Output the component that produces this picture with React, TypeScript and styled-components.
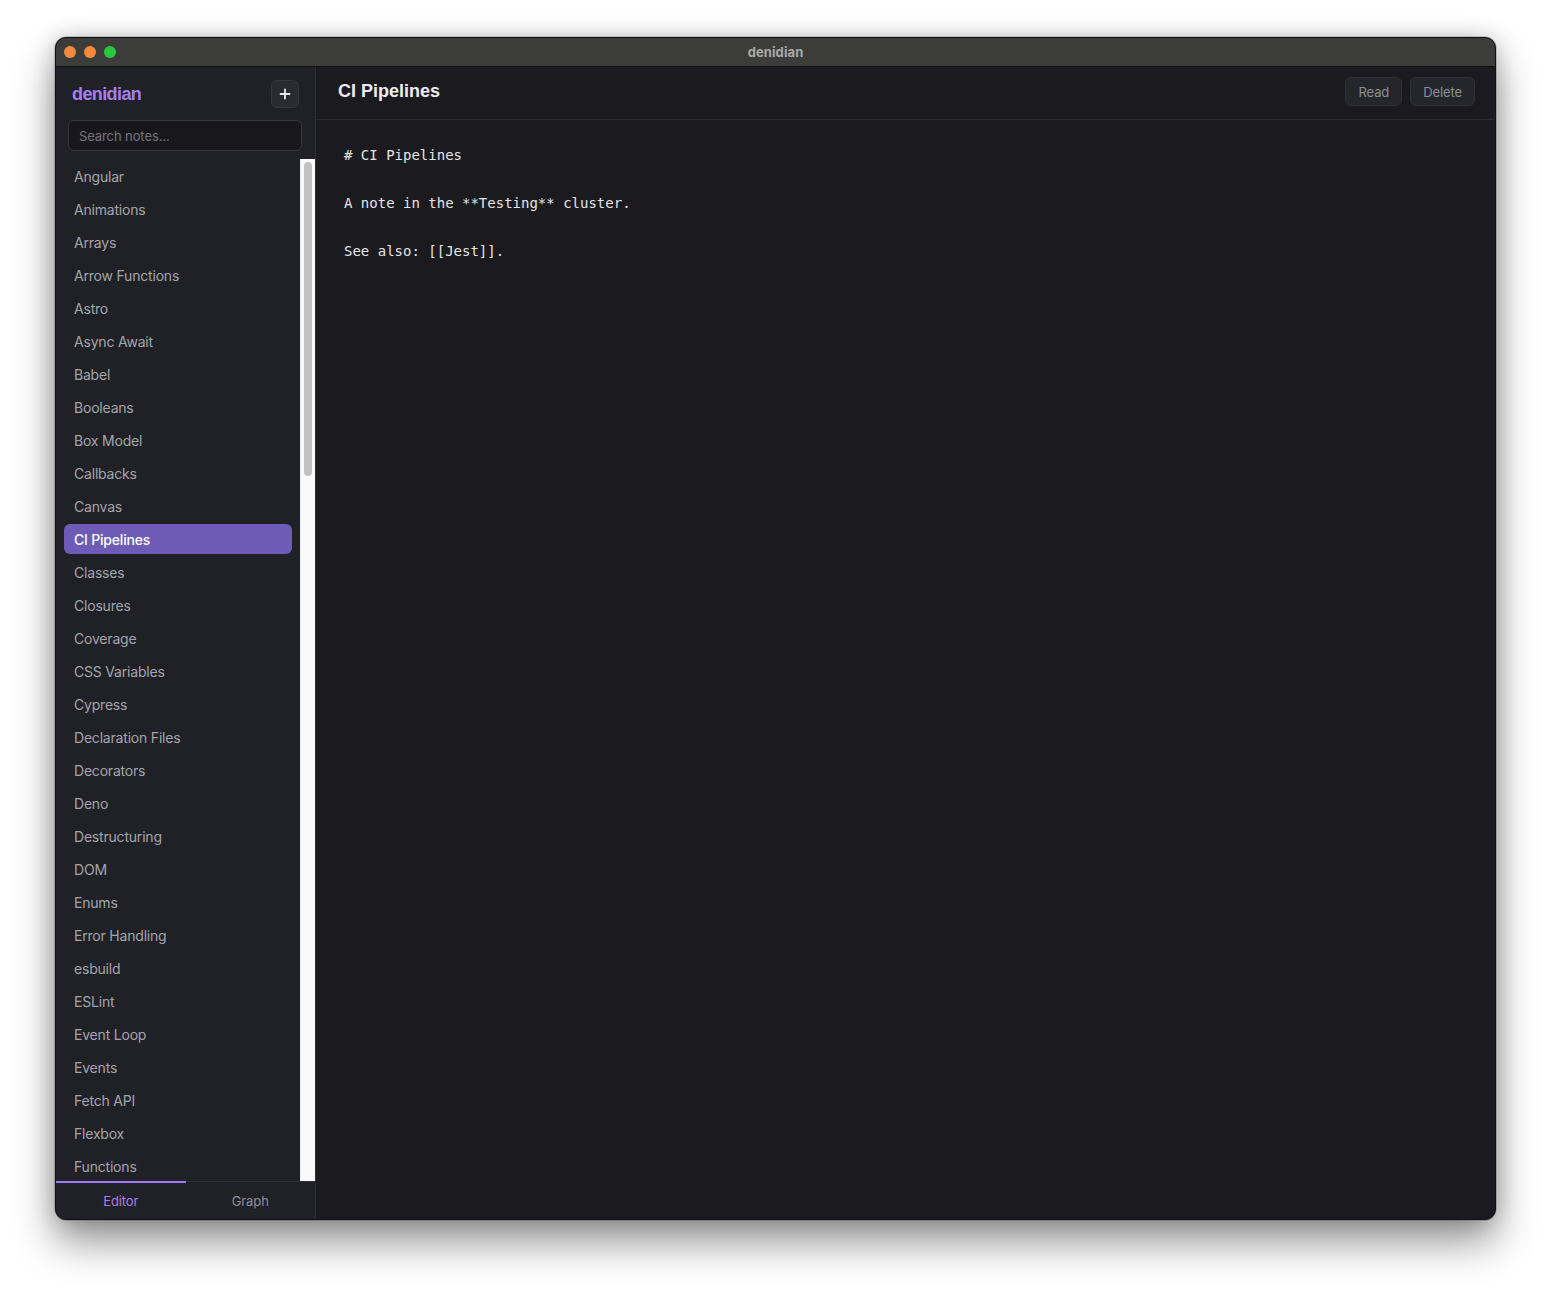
import React from "react";
import styled, { createGlobalStyle } from "styled-components";

const GlobalStyle = createGlobalStyle`
  html, body {
    margin: 0;
    padding: 0;
    background: #ffffff;
  }
  body {
    font-family: Inter, "Liberation Sans", Arial, sans-serif;
    -webkit-font-smoothing: antialiased;
  }
  * { box-sizing: border-box; }
`;

const Page = styled.div`
  width: 1551px;
  height: 1294px;
  padding: 37px 55px 74px 55px;
  background: #ffffff;
`;

const Window = styled.div`
  width: 1441px;
  height: 1183px;
  border-radius: 11px;
  border: 1px solid #111114;
  box-shadow: 0 0 0 0.5px rgba(0, 0, 0, 0.3), 0 22px 40px rgba(0, 0, 0, 0.42),
    0 0 22px rgba(0, 0, 0, 0.18);
  overflow: hidden;
  display: flex;
  flex-direction: column;
  background: #1b1b1f;
`;

const TitleBar = styled.div`
  height: 29px;
  flex: none;
  background: #3c3d3b;
  border-bottom: 1px solid #111;
  display: grid;
  grid-template-columns: 1fr auto 1fr;
  align-items: center;
  padding: 0 8px;
`;

const Lights = styled.div`
  display: flex;
  gap: 8px;
`;

const Light = styled.span<{ $c: string }>`
  width: 12px;
  height: 12px;
  border-radius: 50%;
  background: ${(p) => p.$c};
`;

const TitleText = styled.div`
  font-size: 13px;
  font-weight: 700;
  color: #a9a9a9;
  letter-spacing: 0.1px;
`;

const Body = styled.div`
  flex: 1;
  display: flex;
  min-height: 0;
`;

const Sidebar = styled.aside`
  width: 260px;
  flex: none;
  background: #202126;
  border-right: 1px solid #2e2f35;
  display: flex;
  flex-direction: column;
  min-height: 0;
`;

const SideHeader = styled.div`
  display: flex;
  align-items: center;
  justify-content: space-between;
  padding: 13px 16px 0 16px;
  height: 41px;
`;

const Brand = styled.div`
  font-family: "Liberation Sans", Arial, sans-serif;
  font-size: 18px;
  font-weight: 700;
  color: #a47ff0;
  letter-spacing: -0.6px;
`;

const IconButton = styled.button`
  width: 28px;
  height: 28px;
  border-radius: 6px;
  border: 1px solid #36373e;
  background: #2a2b31;
  color: #e8e8ec;
  display: flex;
  align-items: center;
  justify-content: center;
  padding: 0;
`;

const SearchWrap = styled.div`
  padding: 12px 13px 8px 12px;
`;

const Search = styled.input`
  width: 100%;
  height: 31px;
  border-radius: 6px;
  border: 1px solid #35363c;
  background: #18181c;
  color: #ddd;
  font-family: Inter, "Liberation Sans", Arial, sans-serif;
  font-size: 13px;
  letter-spacing: -0.1px;
  padding: 0 10px;
  outline: none;
  &::placeholder {
    color: #73737b;
  }
`;

const ListArea = styled.div`
  flex: 1;
  min-height: 0;
  display: flex;
`;

const List = styled.div`
  flex: 1;
  min-width: 0;
  overflow: hidden;
  padding: 2px 8px 0 8px;
`;

const ScrollRail = styled.div`
  width: 15px;
  flex: none;
  background: #fafafa;
  border-left: 1px solid #ededed;
  padding: 3px 3px 0 3px;
`;

const ScrollThumb = styled.div`
  width: 8px;
  border-radius: 4px;
  background: #c2c2c2;
`;

const Item = styled.div<{ $active?: boolean }>`
  height: 30px;
  margin-bottom: 3px;
  border-radius: 6px;
  display: flex;
  align-items: center;
  padding: 0 10px;
  font-size: 14px;
  letter-spacing: -0.2px;
  color: ${(p) => (p.$active ? "#ffffff" : "#a4a4ab")};
  font-weight: ${(p) => (p.$active ? 500 : 400)};
  background: ${(p) => (p.$active ? "#6e5bb6" : "transparent")};
  white-space: nowrap;
`;

const Tabs = styled.div`
  height: 38px;
  flex: none;
  display: grid;
  grid-template-columns: 1fr 1fr;
  border-top: 1px solid #2e2f35;
`;

const Tab = styled.div<{ $active?: boolean }>`
  display: flex;
  align-items: center;
  justify-content: center;
  font-size: 13px;
  letter-spacing: -0.1px;
  margin-top: -1px;
  color: ${(p) => (p.$active ? "#a47ff0" : "#8f8f96")};
  border-top: 2px solid ${(p) => (p.$active ? "#9a7cf0" : "transparent")};
`;

const Main = styled.main`
  flex: 1;
  display: flex;
  flex-direction: column;
  min-width: 0;
  background: #1b1b1f;
`;

const MainHeader = styled.div`
  height: 53px;
  flex: none;
  display: flex;
  align-items: center;
  justify-content: space-between;
  padding: 0 20px 0 22px;
  border-bottom: 1px solid #2e2f35;
`;

const NoteTitle = styled.h1`
  margin: 0;
  font-family: "Liberation Sans", Arial, sans-serif;
  font-size: 18px;
  font-weight: 700;
  color: #ececf0;
  margin-top: -4px;
`;

const Actions = styled.div`
  display: flex;
  gap: 8px;
  margin-top: -3px;
`;

const ActionButton = styled.button`
  height: 29px;
  padding: 0 12px;
  border-radius: 6px;
  border: 1px solid #303138;
  background: #25262c;
  color: #8e8e96;
  font-family: Inter, "Liberation Sans", Arial, sans-serif;
  font-size: 13px;
  letter-spacing: -0.1px;
`;

const Editor = styled.div`
  flex: 1;
  padding: 23px 28px;
  font-family: "DejaVu Sans Mono", "Liberation Mono", monospace;
  font-size: 14px;
  line-height: 24px;
  color: #e4e4e8;
  white-space: pre-wrap;
`;

const notes = [
  "Angular", "Animations", "Arrays", "Arrow Functions", "Astro", "Async Await",
  "Babel", "Booleans", "Box Model", "Callbacks", "Canvas", "CI Pipelines",
  "Classes", "Closures", "Coverage", "CSS Variables", "Cypress",
  "Declaration Files", "Decorators", "Deno", "Destructuring", "DOM", "Enums",
  "Error Handling", "esbuild", "ESLint", "Event Loop", "Events", "Fetch API",
  "Flexbox", "Functions", "Generators", "Generics", "Git", "GitHub Actions",
  "GraphQL", "Grid", "Hooks", "HTML", "HTTP", "Immutability", "Interfaces",
  "Iterators", "Jest", "JSON", "JSX", "Lazy Loading", "Linting", "Lodash",
  "Maps", "Media Queries", "Memoization", "Mocking", "Modules", "Monorepos",
  "Next.js", "Node.js", "npm", "Numbers", "Objects", "Performance",
  "Playwright", "pnpm", "Prettier", "Promises", "Props", "Prototypes",
  "Proxies", "React", "Recursion", "Redux", "Regex", "REST", "Rollup",
  "Routing", "Sass", "Selectors", "Sets", "Snapshots", "Sorting", "SQL",
  "State", "Streams", "Strings", "Svelte", "Symbols", "Tailwind", "Testing",
  "Transitions", "Type Guards", "TypeScript", "Union Types", "Unit Tests",
  "Utility Types", "Vite", "Vitest", "Vue", "Web Workers", "Webpack",
  "WebSockets", "Yarn",
];

const visibleNotes = notes.slice(0, 31);
// thumb length is proportional to visible fraction of the list
const thumbRatio = visibleNotes.length / notes.length;

const Plus = () => (
  <svg width="12" height="12" viewBox="0 0 12 12" fill="none">
    <path d="M6 1.5v9M1.5 6h9" stroke="#ececf0" strokeWidth="1.8" strokeLinecap="round" />
  </svg>
);

export default function App() {
  return (
    <>
      <GlobalStyle />
      <Page>
        <Window>
          <TitleBar>
            <Lights>
              <Light $c="#f68b3d" />
              <Light $c="#f68b3d" />
              <Light $c="#2ac840" />
            </Lights>
            <TitleText>denidian</TitleText>
            <div />
          </TitleBar>
          <Body>
            <Sidebar>
              <SideHeader>
                <Brand>denidian</Brand>
                <IconButton aria-label="New note">
                  <Plus />
                </IconButton>
              </SideHeader>
              <SearchWrap>
                <Search placeholder="Search notes..." />
              </SearchWrap>
              <ListArea>
                <List>
                  {visibleNotes.map((n) => (
                    <Item key={n} $active={n === "CI Pipelines"}>
                      {n}
                    </Item>
                  ))}
                </List>
                <ScrollRail>
                  <ScrollThumb style={{ height: `${Math.round(thumbRatio * 1023)}px` }} />
                </ScrollRail>
              </ListArea>
              <Tabs>
                <Tab $active>Editor</Tab>
                <Tab>Graph</Tab>
              </Tabs>
            </Sidebar>
            <Main>
              <MainHeader>
                <NoteTitle>CI Pipelines</NoteTitle>
                <Actions>
                  <ActionButton>Read</ActionButton>
                  <ActionButton>Delete</ActionButton>
                </Actions>
              </MainHeader>
              <Editor>
                {"# CI Pipelines\n\nA note in the **Testing** cluster.\n\nSee also: [[Jest]]."}
              </Editor>
            </Main>
          </Body>
        </Window>
      </Page>
    </>
  );
}
